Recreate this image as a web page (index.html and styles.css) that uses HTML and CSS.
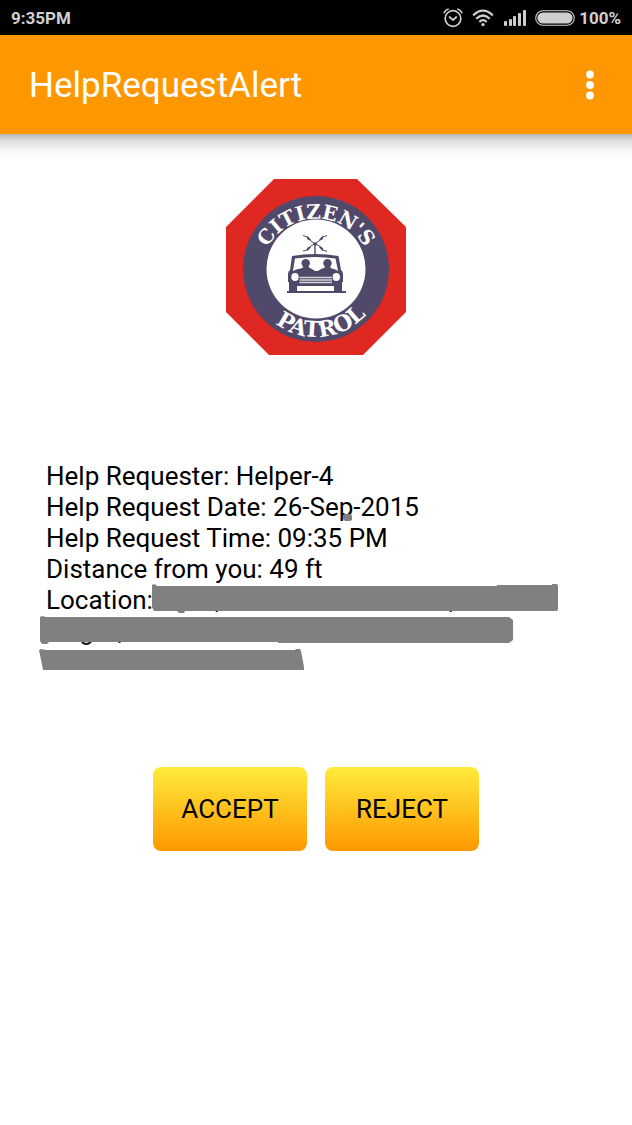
FILE: index.html
```html
<!DOCTYPE html>
<html lang="en">
<head>
    <meta charset="UTF-8">
    <meta name="viewport" content="width=device-width, initial-scale=1.0">
    <title>HelpRequestAlert</title>
    <link rel="stylesheet" href="styles.css">
</head>
<body>
    <div class="status-bar">
        <span class="time">9:35PM</span>
        <div class="status-icons">
            <!-- alarm -->
            <svg width="20" height="20" viewBox="0 0 20 20" fill="none" stroke="#cfcfcf" stroke-width="1.7" stroke-linecap="round" stroke-linejoin="round">
                <circle cx="10" cy="10.5" r="7.8"/>
                <path d="M6.5 9l3.5 3 3.3-3"/>
                <path d="M1.2 4.6q1.2-2.6 3.8-3.4M18.8 4.6q-1.2-2.6-3.8-3.4"/>
            </svg>
            <!-- wifi -->
            <svg width="22" height="18" viewBox="0 0 22 18" fill="none" stroke="#cfcfcf" stroke-width="2.2">
                <path d="M1.2 6.4q9.8-9.4 19.6 0"/>
                <path d="M4.2 9.8q6.8-6.6 13.6 0"/>
                <path d="M7.3 13q3.7-3.6 7.4 0"/>
                <circle cx="11" cy="15.6" r="1.7" fill="#cfcfcf" stroke="none"/>
            </svg>
            <!-- signal -->
            <svg width="23" height="16" viewBox="0 0 23 16" fill="#cfcfcf">
                <rect x="1" y="11" width="3" height="5" rx="1"/>
                <rect x="6" y="9" width="3" height="7" rx="1"/>
                <rect x="10" y="6" width="3" height="10" rx="1"/>
                <rect x="15" y="3" width="3" height="13" rx="1"/>
                <rect x="20" y="0" width="3" height="16" rx="1"/>
            </svg>
            <!-- battery -->
            <svg class="battery" width="40" height="16" viewBox="0 0 40 16">
                <rect x="0.7" y="0.7" width="38.6" height="14.6" rx="7.3" fill="none" stroke="#cfcfcf" stroke-width="1.1"/>
                <rect x="2.4" y="2.4" width="35.2" height="11.2" rx="5.6" fill="#cfcfcf"/>
            </svg>
            <span>100%</span>
        </div>
    </div>

    <header class="app-bar">
        <h1>HelpRequestAlert</h1>
        <button class="menu-button" aria-label="More options">
            <svg width="8" height="30" viewBox="0 0 8 30" fill="#fff">
                <circle cx="4" cy="4.5" r="3.9"/>
                <circle cx="4" cy="15" r="3.9"/>
                <circle cx="4" cy="25.5" r="3.9"/>
            </svg>
        </button>
    </header>

    <main>
        <svg class="logo" width="180" height="176" viewBox="0 0 180 176" role="img" aria-label="Citizen's Patrol">
            <defs>
                <path id="arcTop" d="M35.500 102a55 55 0 1 1 109 0"/>
                <path id="arcBottom" d="M22 90a68 68 0 0 0 136 0"/>
            </defs>
            <path d="M48 0H131L180 48V133L137 176H43L0 133V48Z" fill="#df2822"/>
            <circle cx="90" cy="90" r="73" fill="#50496a"/>
            <circle cx="90" cy="90" r="49.5" fill="#fff"/>
            <text class="logo-text"><textPath href="#arcTop" startOffset="50%">CITIZEN'S</textPath></text>
            <text class="logo-text logo-text-bottom"><textPath href="#arcBottom" startOffset="53%">PATROL</textPath></text>
            <!-- antenna -->
            <g fill="#50496a">
                <circle cx="89" cy="65" r="1.8"/>
                <path d="M88.300 65h1.400v11h-1.400z"/>
            </g>
            <path d="M77 56.500l5.500 2 1 2.500 4.500 3M101 56.500l-5.500 2-1 2.500-4.500 3M77 72l5.500-1.500 1-2.500 4.500-3M101 72.500l-5-2-1-2.500-5-3" fill="none" stroke="#50496a"/>
            <path d="M81.500 57.500l3 3.500-3-1zM96.500 57.500l-3 3.500 3-1zM81.500 71.500l3-3.500-3 1zM96.500 71.500l-3-3.500 3 1z" fill="#50496a" stroke="#50496a"/>
            <!-- car -->
            <g fill="#50496a">
                <path d="M66 77Q89 73 112.500 77L115 91Q117 92 117 95V103H116V113H108V107H71V113H63V103H62V95Q62 92 64 91Z"/>
                <path d="M61 112H120V114H61Z"/>
                <path d="M69 79.500Q89 76.500 109.500 79.500L112 92H67Z" fill="#fff"/>
                <circle cx="79.700" cy="84.300" r="4.200"/>
                <circle cx="101.500" cy="84.300" r="4.200"/>
                <path d="M66 94Q67 91 72 90Q77 89.500 78 87H82Q83 89 86 90L90.500 93L95 90Q99 89 99.500 87H104Q104 89.500 108 90Q112 91 113 94Z"/>
                <path d="M73.500 98.500H106M73.500 101H106M73.500 103.500H106" stroke="#d5d3dc" stroke-width="1.3"/>
                <ellipse cx="69" cy="98" rx="3.7" ry="4" fill="#fff"/>
                <ellipse cx="110.300" cy="98" rx="3.7" ry="4" fill="#fff"/>
            </g>
        </svg>

        <div class="details">
            <p>Help Requester: Helper-4</p>
            <p>Help Request Date: 26-Sep-2015</p>
            <p>Help Request Time: 09:35 PM</p>
            <p>Distance from you: 49 ft</p>
            <p>Location:</p>
            <!-- address is blanked out -->
            <svg class="redaction" width="520" height="217" viewBox="0 0 520 217" aria-hidden="true">
                <path d="M42 181q4 4 9 0M79.500 180v2M177.500 148l-1 3M411.500 148l-1 3" fill="none" stroke="#111" stroke-width="2"/>
                <path d="M303 54l2-1h6l1 2v4l-2 1h-5l-2-2z" fill="#808080"/>
                <path d="M112 124l2-1 2 1 1 1H457v-1h55v-1h5l1 2v23l-1 2H145l-1 2h-5l-2-2H114l-2-4z" fill="#808080"/>
                <path d="M0 156l2-1 4 1H469l4 3v20l-4 3H238v-1H9l-2 2H2l-2-3z" fill="#808080"/>
                <path d="M-1 189l2-1 5 1H255l1-1h4l1 2 3 16v3H3z" fill="#808080"/>
            </svg>
        </div>

        <div class="actions">
            <button class="action">ACCEPT</button>
            <button class="action">REJECT</button>
        </div>
    </main>
</body>
</html>
```
FILE: styles.css
```css
* {
    box-sizing: border-box;
}
body {
    margin: 0;
    min-height: 100vh;
    background: #fff;
    color: #000;
    font-family: Roboto, "Liberation Sans", sans-serif;
}
.status-bar {
    display: flex;
    align-items: center;
    justify-content: space-between;
    height: 35px;
    padding: 0 11px;
    background: #000;
    color: #cfcfcf;
    font-size: 17px;
    font-weight: bold;
}
.status-icons {
    display: flex;
    align-items: center;
    gap: 9px;
}
.battery {
    margin-right: -5px;
}
.app-bar {
    display: flex;
    align-items: center;
    justify-content: space-between;
    height: 99px;
    padding: 0 30px 0 29px;
    background: #ff9800;
    color: #fff;
}
.app-bar h1 {
    margin: 0;
    padding-top: 2px;
    font-size: 35px;
    font-weight: normal;
}
.menu-button {
    display: flex;
    padding: 8px;
    border: none;
    background: none;
    cursor: pointer;
}
main {
    display: flex;
    flex-direction: column;
    align-items: center;
    padding: 45px 46px;
    background: linear-gradient(#b8b8b8 0, #dedede 7px, #f5f5f5 16px, #fff 24px) no-repeat;
}
.logo {
    display: block;
    overflow: visible;
}
.logo-text {
    fill: #fff;
    font-family: "DejaVu Serif", serif;
    font-size: 20px;
    font-weight: bold;
    text-anchor: middle;
}
.logo-text-bottom {
    font-size: 22px;
}
.details {
    position: relative;
    align-self: stretch;
    min-height: 217px;
    margin-top: 106px;
    font-size: 26px;
    line-height: 31px;
}
.details p {
    margin: 0;
}
.redaction {
    position: absolute;
    top: 0;
    left: -6px;
    overflow: visible;
}
.actions {
    display: flex;
    gap: 18px;
    margin-top: 89px;
}
.action {
    width: 154px;
    height: 84px;
    border: none;
    border-radius: 8px;
    background: linear-gradient(#ffeb3b, #ff9800);
    color: #000;
    font-family: inherit;
    font-size: 26px;
    cursor: pointer;
}
```
